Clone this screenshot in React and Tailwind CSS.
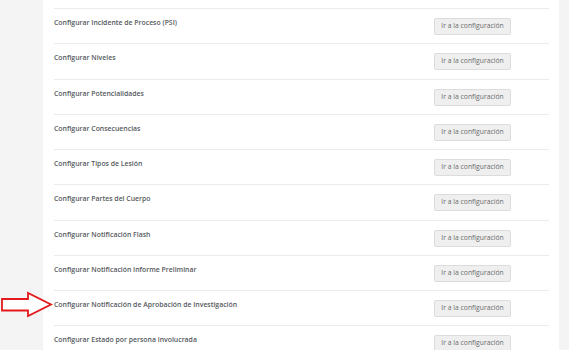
import React from 'react';

const items = [
  'Configurar Incidente de Proceso (PSI)',
  'Configurar Niveles',
  'Configurar Potencialidades',
  'Configurar Consecuencias',
  'Configurar Tipos de Lesión',
  'Configurar Partes del Cuerpo',
  'Configurar Notificación Flash',
  'Configurar Notificación Informe Preliminar',
  'Configurar Notificación de Aprobación de Investigación',
  'Configurar Estado por persona involucrada',
];

// flecha roja que marca la fila
const Arrow = () => (
  <svg className="absolute left-0 top-[291px]" width="54" height="28" viewBox="0 0 54 28">
    <path d="M2 8 H28 V2 L51 13.5 L28 25 V19.5 H2 Z" fill="white" stroke="#e3191b" strokeWidth="1.8" strokeLinejoin="miter" />
  </svg>
);

export default function App() {
  return (
    <div className="w-[569px] h-[350px] overflow-hidden bg-[#f4f4f4] flex relative" style={{ fontFamily: '"Open Sans", sans-serif' }}>
      <div className="w-[43px] shrink-0" />
      <div className="w-[516px] shrink-0 bg-white pl-[11px] pr-[10px] pt-[8px]">
        {items.map((label, i) => (
          <div key={i} className="h-[35.25px] border-t border-[#ebebeb] flex items-start justify-between pt-[9px]">
            <span className="text-[6.9px] font-semibold text-[#555a60] leading-[10px] pt-[0px]">{label}</span>
            <button className="h-[17px] w-[77px] mr-[38px] bg-[#efefef] border border-[#dcdcdc] rounded-[2px] text-[6.8px] text-[#6b6b6b] leading-none">
              Ir a la configuración
            </button>
          </div>
        ))}
      </div>
      <Arrow />
    </div>
  );
}
